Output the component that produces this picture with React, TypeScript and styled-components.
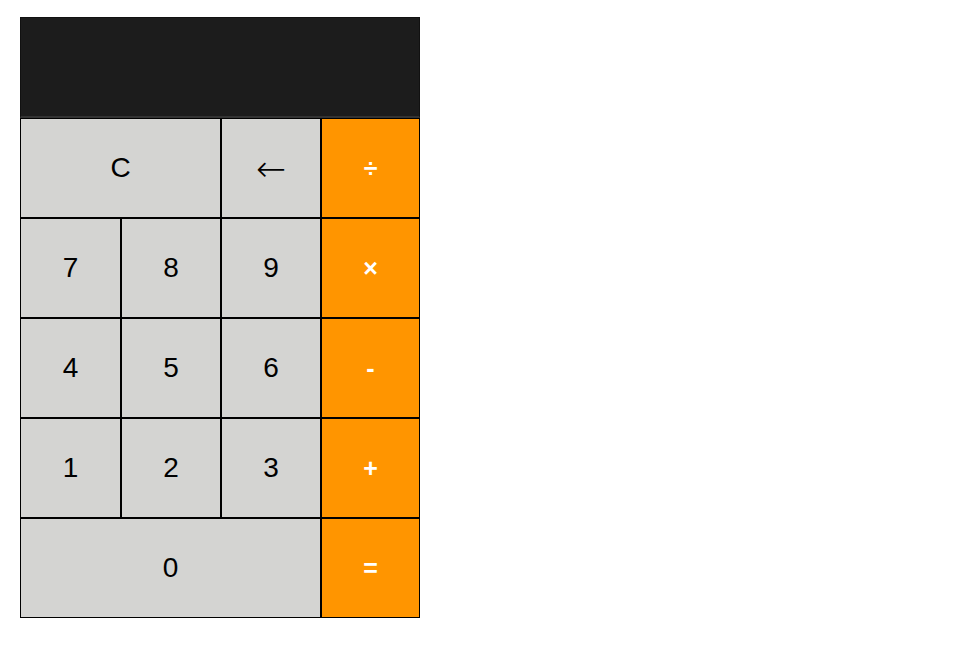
import styled, { createGlobalStyle } from "styled-components";

const GlobalStyle = createGlobalStyle`
  body {
    margin: 0;
    background: #ffffff;
    font-family: "Liberation Sans", Arial, sans-serif;
  }
`;

const Page = styled.div`
  padding: 17px 0 0 20px;
`;

const Calculator = styled.div`
  width: 400px;
`;

const Display = styled.div`
  height: 101px;
  box-sizing: border-box;
  background: #1c1c1c;
  border: 1px solid #111111;
  border-bottom: 2px solid #333333;
  color: #ffffff;
  font-size: 40px;
  display: flex;
  align-items: flex-end;
  justify-content: flex-end;
  padding: 0 12px;
`;

const Keys = styled.div`
  display: grid;
  grid-template-columns: 101px 100px 100px 99px;
  grid-auto-rows: 100px;
`;

const Key = styled.button<{ $span?: number; $op?: boolean }>`
  grid-column: span ${(p) => p.$span ?? 1};
  box-sizing: border-box;
  border: 1px solid #000000;
  border-radius: 0;
  margin: 0;
  padding: 0;
  background: ${(p) => (p.$op ? "#ff9500" : "#d4d4d2")};
  color: ${(p) => (p.$op ? "#ffffff" : "#000000")};
  font-family: "Liberation Sans", Arial, sans-serif;
  font-size: ${(p) => (p.$op ? "25px" : "28px")};
  font-weight: ${(p) => (p.$op ? 700 : 400)};
  display: flex;
  align-items: center;
  justify-content: center;
  cursor: pointer;
`;

const Arrow = styled.span`
  font-family: "DejaVu Sans", sans-serif;
  font-size: 36px;
  font-weight: 300;
`;

const keys: { label: string; span?: number; op?: boolean }[] = [
  { label: "C", span: 2 },
  { label: "←" },
  { label: "÷", op: true },
  { label: "7" },
  { label: "8" },
  { label: "9" },
  { label: "×", op: true },
  { label: "4" },
  { label: "5" },
  { label: "6" },
  { label: "-", op: true },
  { label: "1" },
  { label: "2" },
  { label: "3" },
  { label: "+", op: true },
  { label: "0", span: 3 },
  { label: "=", op: true },
];

export default function App() {
  return (
    <Page>
      <GlobalStyle />
      <Calculator>
        <Display />
        <Keys>
          {keys.map((k) => (
            <Key key={k.label} $span={k.span} $op={k.op}>
              {k.label === "←" ? <Arrow>{k.label}</Arrow> : k.label}
            </Key>
          ))}
        </Keys>
      </Calculator>
    </Page>
  );
}
